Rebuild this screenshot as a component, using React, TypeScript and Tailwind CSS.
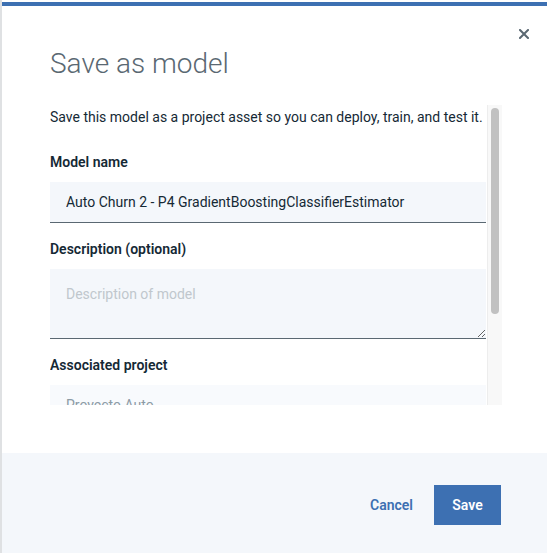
export default function App() {
  return (
    <div className="flex h-[553px] w-[547px] overflow-hidden bg-white font-['Roboto',sans-serif]">
      <div className="w-[2px] shrink-0 bg-[#dfe1e3]" />
      <div className="flex flex-1 flex-col pt-[2px]">
        <div className="flex flex-1 flex-col border-t-4 border-[#3d70b2] bg-white">
          <div className="relative pl-[48px] pt-[40px]">
            <button className="absolute right-[17px] top-[22px] flex h-[12px] w-[12px] items-center justify-center">
              <svg width="10" height="10" viewBox="0 0 10 10">
                <path d="M1 1L9 9M9 1L1 9" stroke="#5a6872" strokeWidth="2" strokeLinecap="square" />
              </svg>
            </button>
            <h1 className="text-[28px] font-light leading-[36px] text-[#5a6872]">Save as model</h1>
          </div>

          <div className="mt-[23px] ml-[48px] flex h-[300px] gap-[1px]">
            <div className="w-[436px] overflow-hidden">
              <div className="flex flex-col pt-[2px] text-[14px] text-[#152935]">
                <p className="whitespace-nowrap leading-[20px]">
                  Save this model as a project asset so you can deploy, train, and test it.
                </p>

                <label className="mt-[25px] font-semibold leading-[20px]">Model name</label>
                <input
                  className="mt-[10px] h-[41px] border-b border-[#5a6872] bg-[#f4f7fb] px-[16px] text-[14px] text-[#152935] outline-none"
                  defaultValue="Auto Churn 2 - P4 GradientBoostingClassifierEstimator"
                />

                <label className="mt-[16px] font-semibold leading-[20px]">Description (optional)</label>
                <textarea
                  className="mt-[10px] h-[70px] border-b border-[#5a6872] bg-[#f4f7fb] px-[16px] py-[15px] text-[14px] leading-[20px] outline-none placeholder:text-[#c0c7cd]"
                  placeholder="Description of model"
                />

                <label className="mt-[16px] font-semibold leading-[20px]">Associated project</label>
                <div className="mt-[10px] flex h-[40px] shrink-0 items-center bg-[#f8fafd] px-[16px] text-[#8c9ba5]">
                  Proyecto Auto
                </div>
              </div>
            </div>
            <div className="w-[15px] border-l border-[#ededed] bg-[#f8f8f8] pl-[3px] pt-[3px]">
              <div className="h-[206px] w-[8px] rounded-full bg-[#c1c1c1]" />
            </div>
          </div>

          <div className="mt-auto flex h-[100px] items-start justify-end bg-[#f4f7fb] pr-[46px] pt-[32px]">
            <button className="mr-[21px] mt-[10px] text-[14px] font-semibold leading-[20px] text-[#3d70b2]">Cancel</button>
            <button className="h-[40px] w-[67px] bg-[#3d70b2] text-[14px] font-semibold text-white">Save</button>
          </div>
        </div>
      </div>
    </div>
  );
}
